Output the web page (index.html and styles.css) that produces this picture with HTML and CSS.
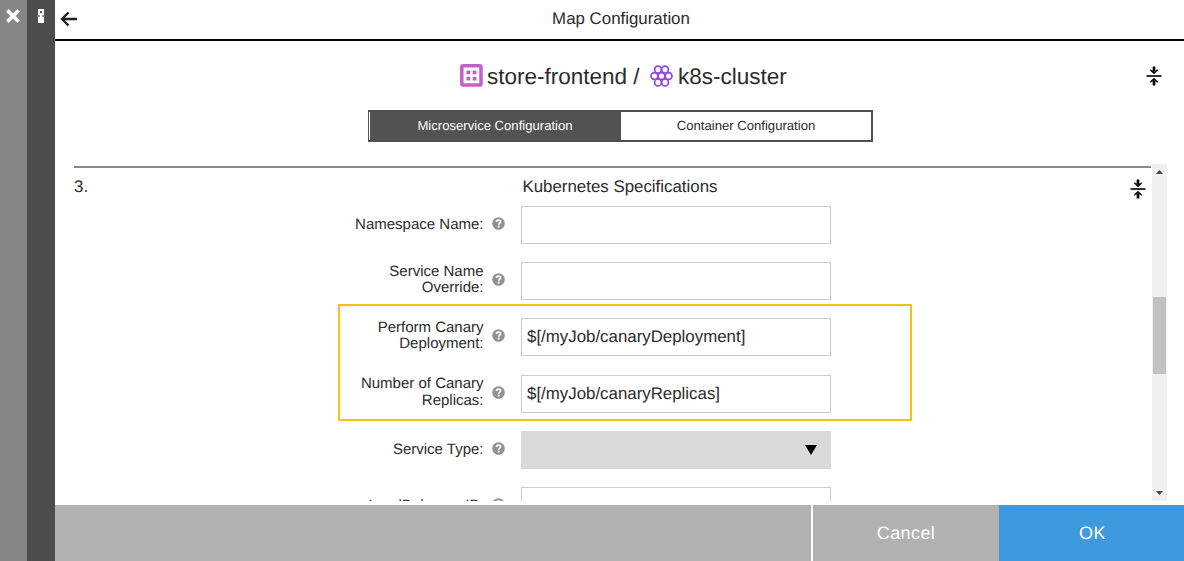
FILE: index.html
```
<!DOCTYPE html>
<html lang="en">
<head>
<meta charset="utf-8">
<title>Map Configuration</title>
<link rel="stylesheet" href="styles.css">
</head>
<body>
<svg class="defs" width="0" height="0">
  <symbol id="collapse" viewBox="0 0 16 20">
    <path d="M0.5 10H15.5" stroke="#000" stroke-width="1.6"/>
    <path d="M8 0.5V5M8 19.5V15" stroke="#000" stroke-width="2.6"/>
    <path d="M4.5 3.6L8 5.4L11.5 3.6V4.7L8 8L4.5 4.7ZM4.5 16.4L8 14.6L11.5 16.4V15.3L8 12L4.5 15.3Z" fill="#000" stroke="#000" stroke-width=".4"/>
  </symbol>
  <symbol id="help" viewBox="0 0 13 13">
    <circle cx="6.5" cy="6.5" r="6.3" fill="#929292"/>
    <path d="M4.4 5C4.4 2.5 8.7 2.5 8.7 4.8C8.7 6.3 6.7 6.1 6.7 7.7" fill="none" stroke="#fff" stroke-width="1.6"/>
    <path d="M5.8 8.7H7.6V10.4H5.8Z" fill="#fff"/>
  </symbol>
</svg>
<div class="app">
  <div class="rail rail-close">
    <svg width="16" height="16" viewBox="0 0 16 16"><path d="M2.4 2.4L13.6 13.6M13.6 2.4L2.4 13.6" stroke="#fff" stroke-width="3.7"/></svg>
  </div>
  <div class="rail rail-map">
    <svg width="8" height="15" viewBox="0 0 8 15"><path d="M1 0H7V6H5V8H7V14H1V8H3V6H1Z" fill="#fff"/><path d="M3 2H5V4H3Z" fill="#4d4d4d"/><path d="M0.5 7H7.5" stroke="#fff" stroke-width=".8"/></svg>
  </div>
  <main class="panel">
    <header class="topbar">
      <svg class="back" width="18" height="16" viewBox="0 0 18 16"><path d="M17 8H2M8.5 1.5L2 8L8.5 14.5" fill="none" stroke="#222" stroke-width="2.4"/></svg>
      <h1 class="title">Map Configuration</h1>
    </header>
    <div class="mapping">
      <svg class="service-icon" width="23" height="23" viewBox="0 0 23 23"><rect x="1.8" y="1.8" width="19.2" height="19.2" rx="1.2" fill="#fff" stroke="#c261c9" stroke-width="3.5"/><path d="M6.5 6.5H10.2V10.2H6.5ZM12.7 6.5H16.4V10.2H12.7ZM6.5 12.7H10.2V16.4H6.5ZM12.7 12.7H16.4V16.4H12.7Z" fill="#c261c9"/></svg>
      <span class="service-name">store-frontend /</span>
      <svg class="cluster-icon" width="23" height="22" viewBox="0 0 23 22"><g fill="none" stroke="#9048dc" stroke-width="1.7"><circle cx="11.5" cy="11" r="3.4"/><circle cx="4.4" cy="11" r="3.4"/><circle cx="18.6" cy="11" r="3.4"/><circle cx="8" cy="4.6" r="3.4"/><circle cx="15" cy="4.6" r="3.4"/><circle cx="8" cy="17.4" r="3.4"/><circle cx="15" cy="17.4" r="3.4"/></g></svg>
      <span class="cluster-name">k8s-cluster</span>
      <svg class="collapse-all" width="16" height="20"><use href="#collapse"/></svg>
    </div>
    <nav class="tabs">
      <div class="tab tab-active">Microservice Configuration</div>
      <div class="tab">Container Configuration</div>
    </nav>
    <div class="scroller">
      <section class="section">
        <div class="section-head">
          <span class="number">3.</span>
          <h2 class="section-title">Kubernetes Specifications</h2>
          <svg class="section-collapse" width="16" height="20"><use href="#collapse"/></svg>
        </div>
        <div class="form">
          <div class="row"><label class="label">Namespace Name:</label><svg class="help"><use href="#help"/></svg><div class="field"></div></div>
          <div class="row"><label class="label two-line">Service Name<br>Override:</label><svg class="help"><use href="#help"/></svg><div class="field"></div></div>
          <div class="row"><label class="label two-line">Perform Canary<br>Deployment:</label><svg class="help"><use href="#help"/></svg><div class="field">$[/myJob/canaryDeployment]</div></div>
          <div class="row"><label class="label two-line">Number of Canary<br>Replicas:</label><svg class="help"><use href="#help"/></svg><div class="field">$[/myJob/canaryReplicas]</div></div>
          <div class="row"><label class="label">Service Type:</label><svg class="help"><use href="#help"/></svg><div class="field select"><svg width="12" height="10" viewBox="0 0 12 10"><path d="M0 0H12L6 10Z"/></svg></div></div>
          <div class="row"><label class="label">LoadBalancer IP:</label><svg class="help"><use href="#help"/></svg><div class="field"></div></div>
          <div class="highlight"></div>
        </div>
      </section>
      <div class="scrollbar">
        <svg class="arrow" width="7" height="4" viewBox="0 0 7 4"><path d="M0 4L3.5 0L7 4Z" fill="#444"/></svg>
        <div class="thumb"></div>
        <svg class="arrow" width="7" height="4" viewBox="0 0 7 4"><path d="M0 0L3.5 4L7 0Z" fill="#444"/></svg>
      </div>
    </div>
    <footer class="footer">
      <div class="spacer"></div>
      <div class="button cancel">Cancel</div>
      <div class="button ok">OK</div>
    </footer>
  </main>
</div>
</body>
</html>
```
FILE: styles.css
```
* { box-sizing: border-box; }
body {
  margin: 0;
  font-family: "Liberation Sans", Arial, sans-serif;
  font-size: 16.875px;
  color: #2b2b2b;
  background: #fff;
  text-rendering: geometricPrecision;
}
svg { display: block; flex: none; }
.defs { position: absolute; }
.app { display: flex; width: 1184px; height: 561px; overflow: hidden; }
.rail { flex: none; display: flex; justify-content: center; align-items: flex-start; }
.rail-close { width: 27px; background: #868686; padding: 8px 1px 0 0; }
.rail-map { width: 28px; background: #4d4d4d; padding-top: 9px; }
.panel { flex: 1; min-width: 0; display: flex; flex-direction: column; }
.topbar {
  height: 41px; flex: none; display: flex; align-items: center;
  border-bottom: 2px solid #000; padding: 0 0 2px 5px;
}
.title { margin: 0 20px 0 0; flex: 1; text-align: center; font-size: 16.875px; font-weight: 400; line-height: 20px; }
.mapping {
  height: 69px; flex: none; display: flex; align-items: center;
  padding-left: 405px; font-size: 22.5px; line-height: 26px; white-space: pre;
}
.service-icon { margin-right: 4px; }
.service-name { width: 163px; padding-top: 2px; }
.cluster-icon { margin-right: 5px; }
.cluster-name { padding-top: 2px; }
.collapse-all { margin: 0 22px 0 auto; }
.tabs {
  display: flex; flex: none; width: 505px; height: 32px; margin-left: 313px;
  border: 2px solid #505050; border-left-width: 1px; font-size: 13.125px;
}
.tab { flex: 1; text-align: center; line-height: 27px; }
.tab-active { flex: 0 0 252px; background: #525252; color: #fff; box-shadow: inset 1px 0 #fff; }
.scroller { height: 337px; flex: none; margin-top: 22px; padding: 0 17px 0 19px; display: flex; overflow: hidden; }
.section { width: 1077px; height: 335px; margin-top: 2px; border-top: 2px solid #8a8a8a; overflow: hidden; margin-right: 1px; }
.section-head { display: flex; align-items: center; height: 38px; }
.number { width: 448.5px; }
.section-title { margin: 0; flex: 1; font-size: 16.875px; font-weight: 400; }
.section-collapse { margin: 3px 5px 0 0; }
.form { position: relative; padding-left: 260px; }
.row { height: 56.2px; display: flex; align-items: flex-start; }
.label {
  width: 149.5px; height: 38px; display: flex; align-items: center; justify-content: flex-end;
  text-align: right; font-size: 15px; line-height: 16.4px;
}
.two-line { padding-bottom: 2px; }
.help { width: 13px; height: 13px; margin: 11px 16.5px 0 8px; }
.field { width: 310px; height: 38px; border: 1px solid #ccc; padding-left: 5px; line-height: 35px; }
.select { background: #d9d9d9; border-color: #d9d9d9; display: flex; align-items: center; justify-content: flex-end; padding-right: 13px; }
.highlight { position: absolute; left: 264px; top: 98px; width: 574px; height: 117px; border: 2px solid #fdc010; }
.scrollbar { width: 15px; background: #f0f0f0; display: flex; flex-direction: column; align-items: center; justify-content: space-between; padding: 6px 0; }
.thumb { width: 13px; height: 77px; background: #c1c1c1; margin-bottom: -6px; }
.footer { flex: none; height: 56px; margin-top: 4px; display: flex; color: #fff; font-size: 18px; letter-spacing: .4px; }
.spacer { flex: 1; background: #b1b1b1; margin-right: 2px; }
.button { width: 186px; text-align: center; line-height: 56px; background: #b1b1b1; }
.ok { background: #3f99df; width: 185px; padding-left: 2px; }
```
